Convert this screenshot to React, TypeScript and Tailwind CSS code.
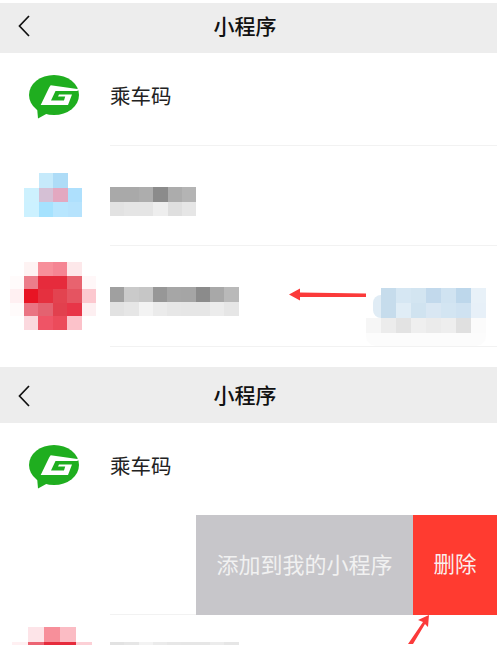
const FONT = "font-['Liberation_Sans','Noto_Sans_CJK_SC',sans-serif]";

type Cell = string;

function Mosaic({ rows, cell, rowH }: { rows: Cell[][]; cell: string; rowH: string }) {
  return (
    <div className="flex flex-col">
      {rows.map((row, i) => (
        <div key={i} className={`flex ${rowH}`}>
          {row.map((c, j) => (
            <div key={j} className={`${cell} ${c}`} />
          ))}
        </div>
      ))}
    </div>
  );
}

const BLUE_ICON = [
  ["bg-white", "bg-[#c6eafb]", "bg-[#aedcf7]", "bg-white"],
  ["bg-[#cdf1fe]", "bg-[#d5c0d5]", "bg-[#e3a8c0]", "bg-[#aee0fd]"],
  ["bg-[#ccf1ff]", "bg-[#a5e2fe]", "bg-[#b8e6fe]", "bg-[#b6e3fd]"],
];

const BLUE_TEXT = [
  ["bg-[#a9a9a9]", "bg-[#a9a9a9]", "bg-[#adadad]", "bg-[#8b8b8b]", "bg-[#acacac]", "bg-[#b4b4b4]"],
  ["bg-[#e2e2e2]", "bg-[#e5e5e5]", "bg-[#e5e5e5]", "bg-[#eeeeee]", "bg-[#dfdfdf]", "bg-[#e6e6e6]"],
];

const RED_ICON = [
  ["bg-white", "bg-[#fef3f3]", "bg-[#f78f9a]", "bg-[#f58593]", "bg-[#fde8ea]", "bg-white"],
  ["bg-[#fffbfb]", "bg-[#ec7d8a]", "bg-[#e62b3c]", "bg-[#e62b3c]", "bg-[#e8636f]", "bg-[#fff7f8]"],
  ["bg-[#fff0f2]", "bg-[#e81424]", "bg-[#e5303f]", "bg-[#e34350]", "bg-[#e55461]", "bg-[#fcc8cf]"],
  ["bg-[#fffbfb]", "bg-[#ea7483]", "bg-[#e46270]", "bg-[#e2404e]", "bg-[#e83548]", "bg-[#fdeff1]"],
  ["bg-white", "bg-[#fbd8de]", "bg-[#ef5466]", "bg-[#ec4b5b]", "bg-[#fcc2ca]", "bg-white"],
];

// the same blurred icon again, cut off by the bottom of the screenshot
const RED_ICON_CUT = [
  ["bg-white", "bg-[#fde4e8]", "bg-[#f78f9a]", "bg-[#fbbcc4]", "bg-white"],
  ["bg-[#fff0f2]", "bg-[#ec6473]", "bg-[#e62b3c]", "bg-[#e62b3c]", "bg-[#fcd0d6]"],
];

const RED_TEXT = [
  ["bg-[#a0a0a0]", "bg-[#cacaca]", "bg-[#c6c6c6]", "bg-[#979797]", "bg-[#a6a6a6]", "bg-[#a5a5a5]", "bg-[#8b8b8b]", "bg-[#a8a8a8]", "bg-[#b9b9b9]"],
  ["bg-[#e2e2e2]", "bg-[#e6e6e6]", "bg-[#f3f3f3]", "bg-[#ebebeb]", "bg-[#e7e7e7]", "bg-[#e6e6e6]", "bg-[#e6e6e6]", "bg-[#ececec]", "bg-[#e6e6e6]"],
];

const BLOB = [
  ["bg-[#c6dcec]", "bg-[#d6e7f3]", "bg-[#d3e5f1]", "bg-[#c2d9ec]", "bg-[#d0e3f1]", "bg-[#bdd7eb]", "bg-[#e8f1f8]"],
  ["bg-[#c6dcec]", "bg-[#e0edf6]", "bg-[#d0e3f0]", "bg-[#d9e7f3]", "bg-[#d3e5f2]", "bg-[#cfe2f1]", "bg-[#e7f0f8]"],
];

const BLOB_GRAY = ["bg-[#f6f6f6]", "bg-[#ececec]", "bg-[#e3e3e3]", "bg-[#efefef]", "bg-[#ebebeb]", "bg-[#eeeeee]", "bg-[#e0e0e0]", "bg-[#fbfbfb]"];

function Header({ shift, chevron }: { shift: string; chevron: string }) {
  return (
    <div className={`relative flex h-full items-center justify-center bg-[#ededed] pr-[7px] ${shift}`}>
      <svg className={`absolute left-[17px] ${chevron}`} width="14" height="24" viewBox="0 0 14 24" fill="none">
        <path d="M12 2 2.500 12l9.500 10" stroke="#111" strokeWidth="1.7" />
      </svg>
      <span className="text-[21px] font-medium text-[#111]">小程序</span>
    </div>
  );
}

function Logo() {
  return (
    <svg width="50" height="44" viewBox="0 0 50 44">
      <ellipse cx="25" cy="20" rx="25" ry="20" fill="#1fae1f" />
      <path d="M8 32 9 43.500 19 38Z" fill="#1fae1f" />
      <path
        d="M21.700 10.300 50 14.300 48.300 16H26.500L22 25.500H35L36.200 21.500H29L30 19.500H43L39 30H11.700L20.300 12.300Z"
        fill="#fff"
      />
    </svg>
  );
}

function AppRow({ name }: { name: string }) {
  return (
    <div className="flex h-full items-center pb-[4px]">
      <div className="w-[110px] shrink-0 pl-[29px]">
        <Logo />
      </div>
      <span className="text-[20.500px] text-[#222]">{name}</span>
    </div>
  );
}

function Divider() {
  return <div className="ml-[110px] h-px bg-[#f2f2f2]" />;
}

export default function App() {
  return (
    <div className={`${FONT} relative h-[645px] w-[497px] overflow-hidden bg-white`}>
      <div className="pt-[3px]">
        <div className="h-[50px]">
          <Header shift="pb-[2px]" chevron="top-[11px]" />
        </div>
      </div>

      <div className="h-[92px]">
        <AppRow name="乘车码" />
      </div>
      <Divider />

      <div className="flex h-[99px]">
        <div className="flex w-[110px] justify-end pr-[28px] pt-[27px]">
          <Mosaic rows={BLUE_ICON} cell="w-[14.4px]" rowH="h-[14.500px]" />
        </div>
        <div className="pt-[41px]">
          <Mosaic rows={BLUE_TEXT} cell="w-[14.4px]" rowH="h-[14.500px]" />
        </div>
      </div>
      <Divider />

      <div className="flex h-[100px]">
        <div className="flex w-[110px] justify-end pr-[14px] pt-[16px]">
          <Mosaic rows={RED_ICON} cell="w-[14.4px]" rowH="h-[13.600px]" />
        </div>
        <div className="pt-[41px]">
          <Mosaic rows={RED_TEXT} cell="w-[14.3px]" rowH="h-[14.500px]" />
        </div>
      </div>
      <Divider />

      <div className="h-[20px]" />
      <div className="h-[56px]">
        <Header shift="pt-[2px]" chevron="top-[17px]" />
      </div>

      <div className="h-[92px]">
        <AppRow name="乘车码" />
      </div>

      <div className="flex h-[100px]">
        <div className="w-[196px]" />
        <div className="flex w-[217px] items-center justify-center bg-[#c7c6ca] text-[22px] text-[#f1f1f1]">
          添加到我的小程序
        </div>
        <div className="flex flex-1 items-center justify-center bg-[#ff3b30] text-[21.500px] text-[#fbeeee]">
          删除
        </div>
      </div>
      <div className="ml-[110px] -mt-px h-px w-[86px] bg-[#f2f2f2]" />

      <div className="flex">
        <div className="flex w-[110px] pl-[12px] pt-[12px]">
          <Mosaic rows={RED_ICON_CUT} cell="w-[16px]" rowH="h-[15px]" />
        </div>
        <div className="pt-[27px]">
          <Mosaic rows={[RED_TEXT[1]]} cell="w-[14.3px]" rowH="h-[14.500px]" />
        </div>
      </div>

      {/* annotations on top of the screenshot */}
      <svg className="absolute left-[289px] top-[288px]" width="78" height="13" viewBox="0 0 78 13">
        <path d="M0 6.500 11 .5v4l66 1V9L11 9v3.500Z" fill="#fb3a3a" />
      </svg>
      <div className="absolute left-[366px] top-[288px]">
        <div className="flex items-end">
          <div className="w-[7px]" />
          <div className="h-[23px] w-[8px] rounded-l-full bg-[#e0ecf5]" />
          <Mosaic rows={BLOB} cell="w-[15px]" rowH="h-[15px]" />
        </div>
        <div className="flex h-[15px]">
          {BLOB_GRAY.map((c, i) => (
            <div key={i} className={`w-[15px] ${c}`} />
          ))}
        </div>
        <div className="h-[13px] w-[120px] rounded-b-[10px] bg-[#fcfcfc]" />
      </div>
      <svg className="absolute left-[404px] top-[614px]" width="28" height="31" viewBox="0 0 28 31">
        <path d="M25 1 14 6l5 2L4 30h5L21 10l3 3Z" fill="#fb3a3a" />
      </svg>
    </div>
  );
}
